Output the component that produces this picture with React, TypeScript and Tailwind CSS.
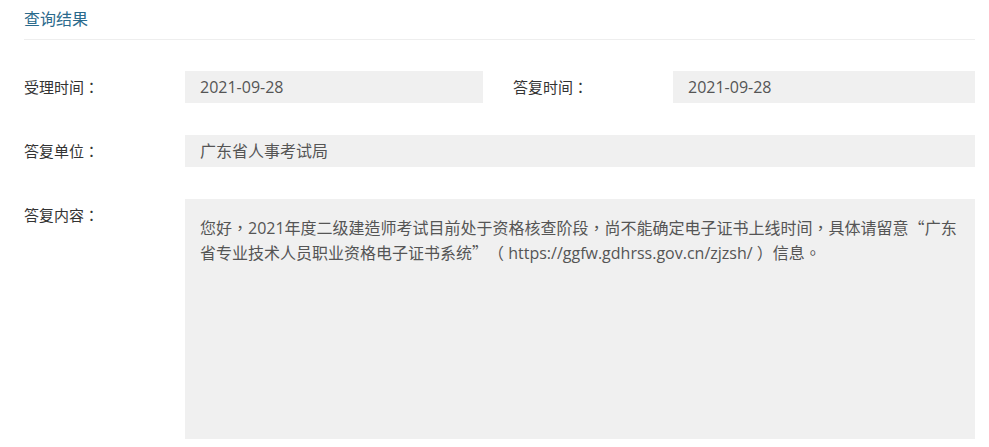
const font = { fontFamily: '"Open Sans", "Noto Sans CJK TC", sans-serif' }

function Field({ children }: { children: React.ReactNode }) {
  return (
    <div className="h-[32px] bg-[#f0f0f0] pl-[15px] leading-[32px] text-[16px] text-[#555]">
      {children}
    </div>
  )
}

function Label({ children, className = '' }: { children: React.ReactNode; className?: string }) {
  return <div className={`shrink-0 leading-[32px] text-[15px] text-[#333] ${className}`}>{children}</div>
}

// full-width quote marks come from the CJK font, like the original page
function Q({ children }: { children: string }) {
  return <span className="font-['Noto_Sans_CJK_TC']">{children}</span>
}

export default function App() {
  return (
    <div className="min-h-[447px] bg-white pl-[24px] pr-[14px] [text-spacing-trim:space-all]" style={font}>
      <div className="border-b border-[#eeeeee] pt-[8px] pb-[9px]">
        <h2 className="text-[16px] leading-[22px] text-[#2b6a8c]">查询结果</h2>
      </div>

      <div className="mt-[31px] flex">
        <Label className="w-[161px]">受理时间：</Label>
        <div className="w-[298px]">
          <Field>2021-09-28</Field>
        </div>
        <Label className="ml-[30px] w-[160px]">答复时间：</Label>
        <div className="flex-1">
          <Field>2021-09-28</Field>
        </div>
      </div>

      <div className="mt-[32px] flex">
        <Label className="w-[161px]">答复单位：</Label>
        <div className="flex-1">
          <Field>广东省人事考试局</Field>
        </div>
      </div>

      <div className="mt-[32px] flex">
        <Label className="w-[161px]">答复内容：</Label>
        <div className="h-[240px] flex-1 bg-[#f0f0f0] pl-[15px] pr-[17px] pt-[16px] text-[16px] leading-[24px] text-[#555]">
          您好，2021年度二级建造师考试目前处于资格核查阶段，尚不能确定电子证书上线时间，具体请留意<Q>“</Q>广东省专业技术人员职业资格电子证书系统<Q>”</Q>（ https://ggfw.gdhrss.gov.cn/zjzsh/ ）信息。
        </div>
      </div>
    </div>
  )
}
